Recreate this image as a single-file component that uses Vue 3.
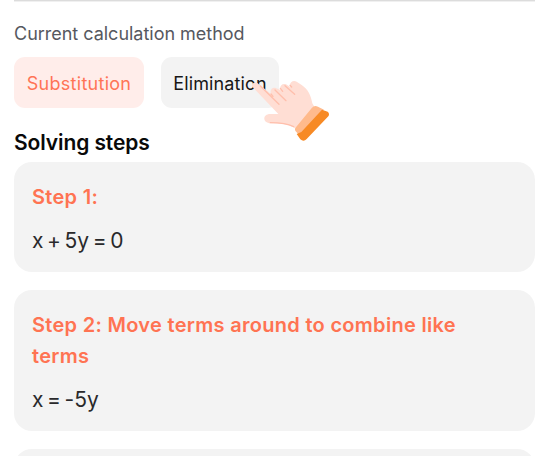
<script setup>
const steps = [
  { title: 'Step 1:', formula: 'x + 5y = 0' },
  { title: 'Step 2: Move terms around to combine like terms', formula: 'x = -5y' },
]
</script>

<template>
  <main class="page">
    <p class="label">Current calculation method</p>
    <div class="methods">
      <button class="method active">Substitution</button>
      <button class="method elimination">Elimination
        <svg class="hand" viewBox="0 0 300 240" aria-hidden="true">
          <path fill="#ffded4" d="M37 50C33 43 42 33 52 39L93 72C88 61 97 50 107 54L122 60C117 48 127 38 138 43L151 51C146 39 158 29 170 35L185 45C204 58 213 76 217 100L224 112L168 178L160 172C140 161 119 161 92 160C66 159 67 131 92 132L115 132Z" />
          <path fill="none" stroke="#ffbfac" stroke-width="4" stroke-linecap="round" d="M61 48L117 103M93 72L99 79M105 60L138 92M121 55L128 64M135 47L164 73M150 46L155 51M91 158C109 158 137 158 161 170" />
          <path fill="#ffba8c" d="M216 113Q223 105 234 110L252 119L180 198L167 184Q162 177 169 170Z" />
          <path fill="#f78a25" d="M246 119L263 125Q270 131 265 139L200 207Q191 217 181 208L170 192L184 186Z" />
        </svg>
      </button>
    </div>
    <h2>Solving steps</h2>
    <section v-for="step in steps" :key="step.title" class="card">
      <h3>{{ step.title }}</h3>
      <p>{{ step.formula }}</p>
    </section>
    <section class="card"></section>
  </main>
</template>

<style>
body { background: #fff; overflow: hidden; }
</style>

<style scoped>
.page { box-sizing: border-box; width: 521px; height: 456px; margin-left: 14px; overflow: hidden; border-top: 1px solid #dcdcdc; box-shadow: inset 0 1px #f0f0f0; font-family: Inter, "Liberation Sans", sans-serif; }
p, h2, h3 { margin: 0; }
.label { height: 26px; padding-top: 19px; line-height: 27px; font-size: 18px; letter-spacing: -.02px; color: #565860; white-space: nowrap; }
.methods { display: flex; gap: 17px; margin-top: 11px; height: 51px; }
.method { position: relative; width: 130px; height: 51px; padding: 1px 0 0; border: 0; border-radius: 11px; font: 18px Inter, "Liberation Sans", sans-serif; letter-spacing: .28px; }
.active { color: #ff7456; background: #ffedea; }
.elimination { width: 118px; color: #171717; background: #f3f3f3; letter-spacing: .12px; }
.hand { position: absolute; left: 79px; top: 13px; width: 100px; height: 80px; }
h2 { height: 54px; line-height: 69px; font-size: 21px; font-weight: 600; letter-spacing: -.1px; color: #090909; }
.card { box-sizing: border-box; margin-bottom: 18px; padding: 20px 60px 15px 18px; border-radius: 18px; background: #f3f3f3; min-height: 110px; }
h3 { font-size: 20px; line-height: 31px; font-weight: 600; letter-spacing: .3px; color: #ff7352; }
.card p { margin-top: 12px; font-size: 21px; line-height: 32px; letter-spacing: -.05px; word-spacing: -2.2px; color: #29292b; }
</style>
